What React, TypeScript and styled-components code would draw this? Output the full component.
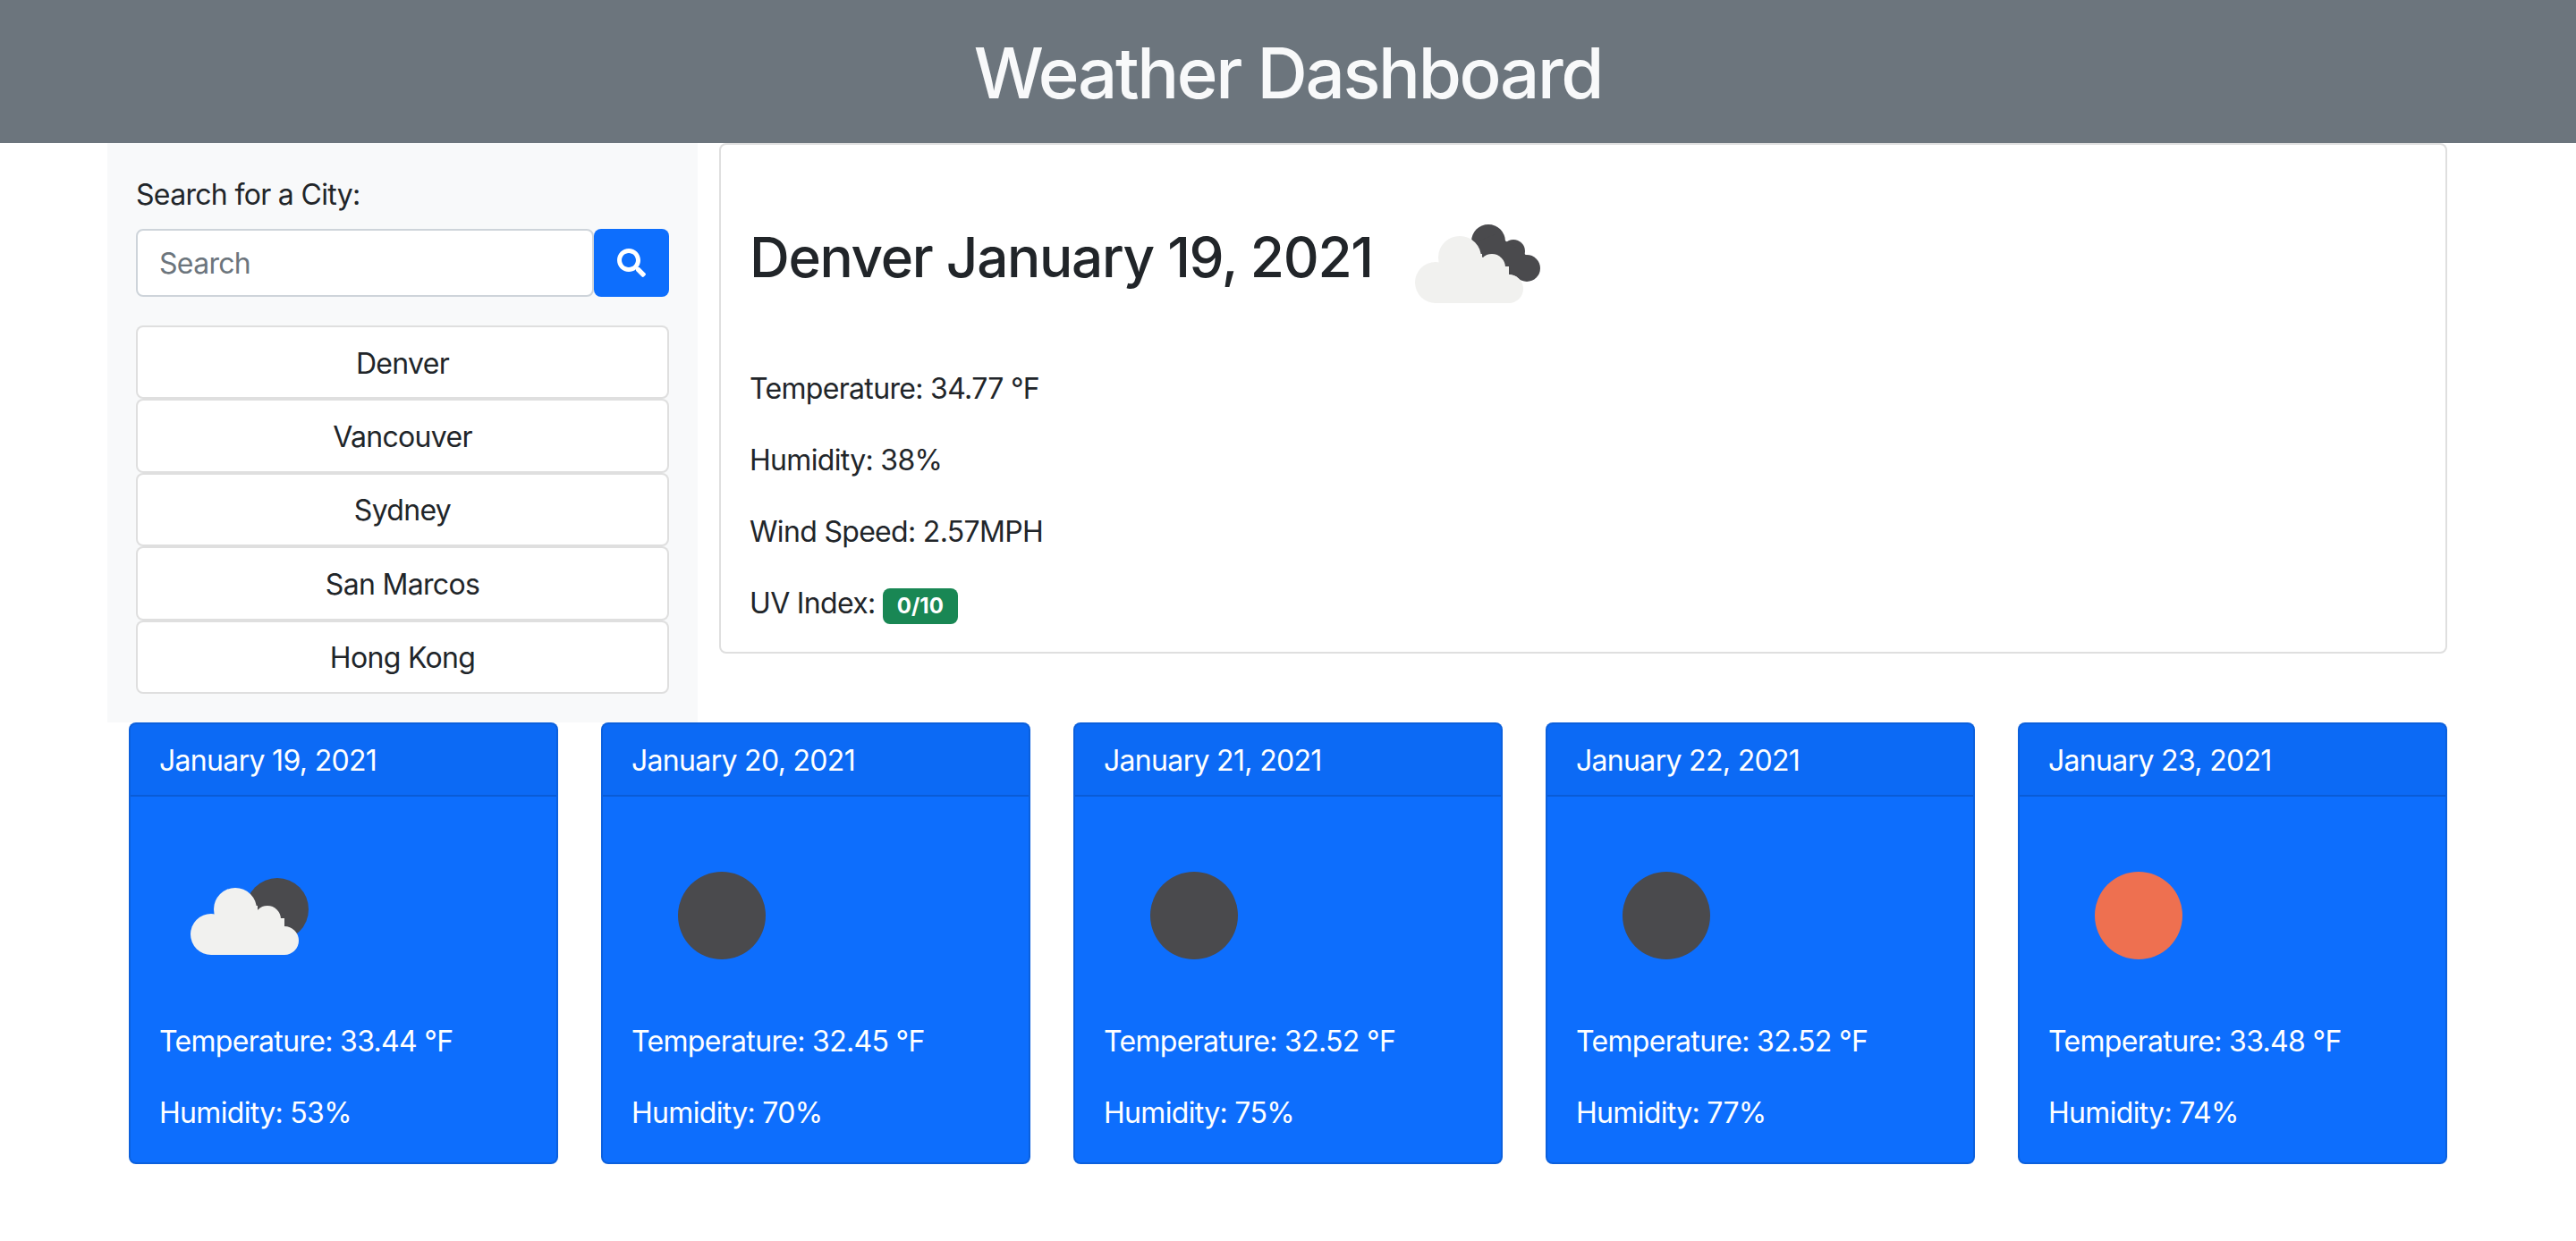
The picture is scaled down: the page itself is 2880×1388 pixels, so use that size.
import React from 'react';
import styled, { createGlobalStyle } from 'styled-components';
import { FaSearch } from 'react-icons/fa';

const GlobalStyle = createGlobalStyle`
  * {
    box-sizing: border-box;
  }

  body {
    margin: 0;
    background: #fff;
    color: #212529;
    font-family: Inter, 'Liberation Sans', sans-serif;
    font-size: 32px;
    line-height: 48px;
    letter-spacing: -0.68px;
  }
`;

const Header = styled.header`
  display: flex;
  align-items: center;
  justify-content: center;
  height: 160px;
  background: #6c757d;
`;

const Title = styled.h1`
  margin: 0;
  padding-top: 3px;
  color: #f8f9fa;
  font-size: 78px;
  font-weight: 500;
  line-height: 1.2;
  letter-spacing: -2.35px;
`;

const Container = styled.main`
  width: 2640px;
  margin: 0 auto;
`;

const TopRow = styled.div`
  display: grid;
  grid-template-columns: 660px 1980px;
  align-items: start;
`;

const Sidebar = styled.aside`
  display: flex;
  flex-direction: column;
  padding: 32px;
  background: #f8f9fa;
`;

const SearchLabel = styled.label`
  margin-bottom: 14px;
  padding-top: 2px;
`;

const SearchGroup = styled.div`
  display: flex;
  margin-bottom: 32px;
`;

const SearchInput = styled.input`
  flex: 1;
  min-width: 0;
  height: 76px;
  padding: 12px 24px;
  border: 2px solid #ced4da;
  border-radius: 8px;
  background: #fff;
  color: #212529;
  font: inherit;
  letter-spacing: inherit;
  outline: none;

  &::placeholder {
    color: #6c757d;
    opacity: 1;
  }
`;

const SearchButton = styled.button`
  display: flex;
  align-items: center;
  justify-content: center;
  width: 84px;
  height: 76px;
  padding: 0;
  border: 0;
  border-radius: 8px;
  background: #0d6efd;
  color: #fff;
  font-size: 32px;
`;

const CityList = styled.div`
  display: flex;
  flex-direction: column;
`;

const CityButton = styled.button`
  height: 82.4px;
  padding: 3px 0 0;
  border: 2px solid rgba(0, 0, 0, 0.125);
  border-radius: 8px;
  background: #fff;
  color: #212529;
  font: inherit;
  letter-spacing: inherit;
  text-align: center;
`;

const MainColumn = styled.section`
  padding: 0 24px;
`;

const CurrentCard = styled.div`
  padding: 32px 32px 30px;
  border: 2px solid rgba(0, 0, 0, 0.125);
  border-radius: 8px;
  background: #fff;
`;

const CityHeading = styled.h2`
  display: flex;
  align-items: center;
  gap: 12px;
  height: 217px;
  margin: 0;
  padding-bottom: 17px;
  font-size: 62px;
  font-weight: 500;
  line-height: 1.2;
  letter-spacing: -1.3px;
`;

const CityHeadingText = styled.span`
  padding-bottom: 12px;
`;

const Stat = styled.p`
  margin: 0 0 32px;

  &:last-child {
    margin-bottom: 0;
  }
`;

const UvBadge = styled.span`
  display: inline-block;
  padding: 8px 16px;
  border-radius: 8px;
  background: #198754;
  color: #fff;
  font-size: 24px;
  font-weight: 700;
  line-height: 24px;
  letter-spacing: 0;
  vertical-align: baseline;
`;

const ForecastRow = styled.div`
  display: grid;
  grid-template-columns: repeat(5, 480px);
  gap: 48px;
  padding: 0 24px;
`;

const ForecastCard = styled.article`
  border: 2px solid rgba(0, 0, 0, 0.125);
  border-radius: 8px;
  background: #0d6efd;
  color: #fff;
  overflow: hidden;
`;

const ForecastDate = styled.div`
  height: 81px;
  padding: 17px 32px 0;
  border-bottom: 2px solid rgba(0, 0, 0, 0.125);
  background: rgba(0, 0, 0, 0.03);
`;

const ForecastBody = styled.div`
  padding: 32px 32px 31px;
`;

const IconSvg = styled.svg`
  display: block;
  flex: none;
  width: 200px;
  height: 200px;
`;

const ForecastIcon = styled(IconSvg)`
  margin-bottom: 18px;
`;

const CLOUD = '#f1f1ef';
const DARK = '#4a4a4d';

const Cloud = () => (
  <g fill={CLOUD}>
    <circle cx="58" cy="122" r="23" />
    <circle cx="85" cy="94" r="24" />
    <circle cx="121" cy="105" r="15" />
    <circle cx="140" cy="129" r="16" />
    <rect x="58" y="104" width="82" height="41" />
    <rect x="75" y="90" width="35" height="20" />
  </g>
);

const IconArt = ({ kind }: { kind: string }) => {
  if (kind === 'brokenClouds') {
    return (
      <>
        <g fill={DARK}>
          <circle cx="117" cy="76" r="19" />
          <circle cx="145" cy="87" r="13" />
          <circle cx="160" cy="106" r="15" />
          <polygon points="105,76 125,68 137,76 150,84 165,96 165,120 130,110" />
        </g>
        <Cloud />
      </>
    );
  }
  if (kind === 'fewClouds') {
    return (
      <>
        <circle cx="132" cy="94" r="35" fill={DARK} />
        <Cloud />
      </>
    );
  }
  return <circle cx="101" cy="101" r="49" fill={kind === 'sun' ? '#ee7050' : DARK} />;
};

const forecast = [
  { date: 'January 19, 2021', icon: 'fewClouds', temp: '33.44', humidity: '53' },
  { date: 'January 20, 2021', icon: 'moon', temp: '32.45', humidity: '70' },
  { date: 'January 21, 2021', icon: 'moon', temp: '32.52', humidity: '75' },
  { date: 'January 22, 2021', icon: 'moon', temp: '32.52', humidity: '77' },
  { date: 'January 23, 2021', icon: 'sun', temp: '33.48', humidity: '74' },
];

const cities = ['Denver', 'Vancouver', 'Sydney', 'San Marcos', 'Hong Kong'];

const App = () => {
  return (
    <>
      <GlobalStyle />
      <Header>
        <Title>Weather Dashboard</Title>
      </Header>
      <Container>
        <TopRow>
          <Sidebar>
            <SearchLabel htmlFor="city">Search for a City:</SearchLabel>
            <SearchGroup>
              <SearchInput id="city" placeholder="Search" />
              <SearchButton aria-label="Search">
                <FaSearch />
              </SearchButton>
            </SearchGroup>
            <CityList>
              {cities.map((city) => (
                <CityButton key={city}>{city}</CityButton>
              ))}
            </CityList>
          </Sidebar>
          <MainColumn>
            <CurrentCard>
              <CityHeading>
                <CityHeadingText>Denver January 19, 2021</CityHeadingText>
                <IconSvg viewBox="0 0 200 200">
                  <IconArt kind="brokenClouds" />
                </IconSvg>
              </CityHeading>
              <Stat>Temperature: 34.77 °F</Stat>
              <Stat>Humidity: 38%</Stat>
              <Stat>Wind Speed: 2.57MPH</Stat>
              <Stat>
                UV Index: <UvBadge>0/10</UvBadge>
              </Stat>
            </CurrentCard>
          </MainColumn>
        </TopRow>
        <ForecastRow>
          {forecast.map((day) => (
            <ForecastCard key={day.date}>
              <ForecastDate>{day.date}</ForecastDate>
              <ForecastBody>
                <ForecastIcon viewBox="0 0 200 200">
                  <IconArt kind={day.icon} />
                </ForecastIcon>
                <Stat>Temperature: {day.temp} °F</Stat>
                <Stat>Humidity: {day.humidity}%</Stat>
              </ForecastBody>
            </ForecastCard>
          ))}
        </ForecastRow>
      </Container>
    </>
  );
};

export default App;
